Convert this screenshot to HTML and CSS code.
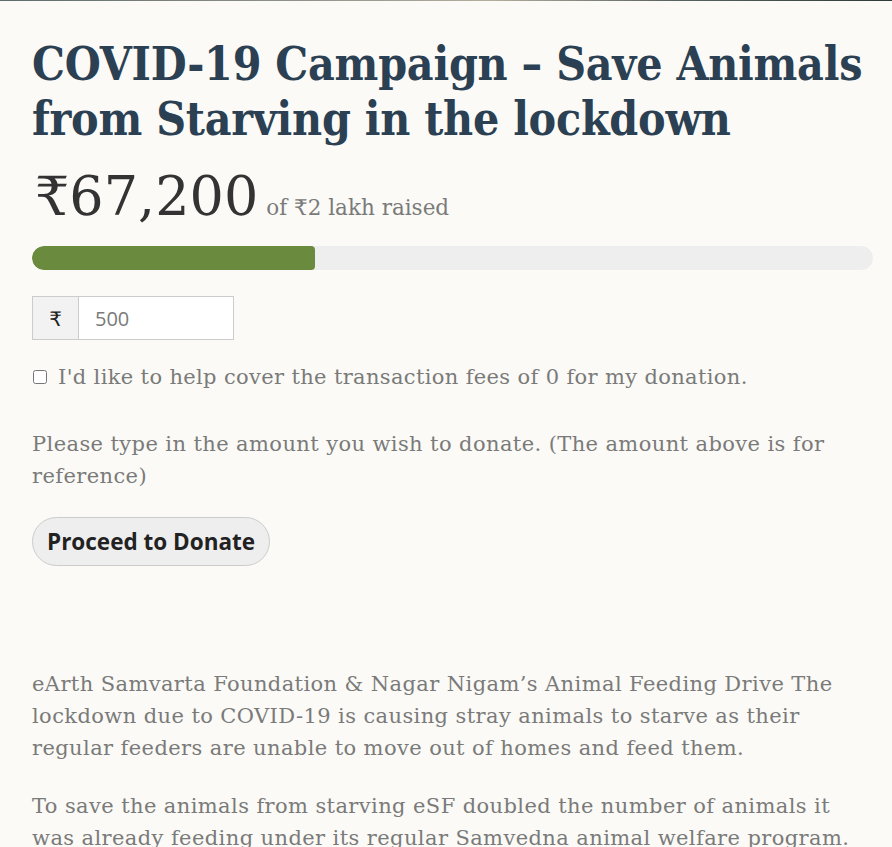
FILE: index.html
```html
<!DOCTYPE html>
<html lang="en">
<head>
<meta charset="utf-8">
<title>COVID-19 Campaign</title>
<link rel="stylesheet" href="styles.css">
</head>
<body>
<div class="topline"></div>
<main class="page">
  <h1 class="title">COVID-19 Campaign – Save Animals from Starving in the lockdown</h1>
  <div class="raised">
    <span class="raised-amount">₹67,200</span>
    <span class="raised-goal">of ₹2 lakh raised</span>
  </div>
  <div class="progress"><div class="progress-fill" style="width:33.6%"></div></div>
  <div class="amount-group">
    <span class="amount-prefix">₹</span>
    <input class="amount-input" type="text" value="500">
  </div>
  <label class="fees">
    <input class="fees-check" type="checkbox">
    <span>I'd like to help cover the transaction fees of 0 for my donation.</span>
  </label>
  <p class="note">Please type in the amount you wish to donate. (The amount above is for reference)</p>
  <button class="donate-btn" type="button">Proceed to Donate</button>
  <div class="description">
    <p>eArth Samvarta Foundation &amp; Nagar Nigam’s Animal Feeding Drive The lockdown due to COVID-19 is causing stray animals to starve as their regular feeders are unable to move out of homes and feed them.</p>
    <p>To save the animals from starving eSF doubled the number of animals it was already feeding under its regular Samvedna animal welfare program.</p>
  </div>
</main>
</body>
</html>
```

FILE: styles.css
```css
html, body {
  margin: 0;
  padding: 0;
  background: #fbfaf6;
}
body {
  font-family: "DejaVu Serif", "Liberation Serif", serif;
  color: #777;
  overflow: hidden;
}
.topline {
  height: 1px;
  background: linear-gradient(90deg, #5c6b6b 0%, #9a9a90 40%, #b3ad9c 55%, #5a6462 75%, #2e3a37 100%);
}
.page {
  padding: 0 19px 0 32px;
}
.title {
  margin: 36px 0 0;
  font-family: "DejaVu Serif Condensed", "DejaVu Serif", serif;
  font-stretch: condensed;
  font-size: 46px;
  letter-spacing: -0.25px;
  line-height: 55px;
  font-weight: 700;
  color: #2b4153;
}
.raised {
  margin-top: 20px;
  display: flex;
  align-items: baseline;
  gap: 8px;
}
.raised-amount {
  font-size: 54px;
  line-height: 60px;
  color: #333;
  padding-left: 3px;
}
.raised-goal {
  font-size: 21.5px;
  color: #7a7a7a;
}
.progress {
  margin-top: 19px;
  height: 24px;
  border-radius: 12px;
  background: #eeeeee;
  overflow: hidden;
}
.progress-fill {
  height: 100%;
  background: #6a8a3e;
  border-radius: 12px 4px 4px 12px;
}
.amount-group {
  margin-top: 26px;
  display: flex;
  width: 202px;
  height: 44px;
  box-sizing: border-box;
  border: 1px solid #cccccc;
}
.amount-prefix {
  width: 45px;
  display: flex;
  align-items: center;
  justify-content: center;
  background: #f2f2f2;
  border-right: 1px solid #cccccc;
  font-family: "Open Sans", "DejaVu Sans", sans-serif;
  font-size: 20px;
  color: #222;
}
.amount-input {
  flex: 1;
  min-width: 0;
  border: 0;
  outline: 0;
  background: #fff;
  padding: 0 0 0 16px;
  font-family: "Open Sans", "DejaVu Sans", sans-serif;
  font-size: 20px;
  color: #7a7a7a;
}
.fees {
  margin-top: 21px;
  display: flex;
  align-items: center;
  gap: 11px;
  font-size: 21px;
  letter-spacing: 0.35px;
  line-height: 32px;
  color: #7a7a7a;
}
.fees-check {
  margin: 0 0 0 1px;
  width: 14px;
  height: 14px;
}
.note {
  margin: 35px 0 0;
  font-size: 21px;
  letter-spacing: 0.4px;
  line-height: 32px;
  color: #7a7a7a;
}
.donate-btn {
  margin-top: 25px;
  height: 49px;
  padding: 0 14px;
  border: 1px solid #cccccc;
  border-radius: 25px;
  background: #eeeeee;
  font-family: "Open Sans", "DejaVu Sans", sans-serif;
  font-weight: 700;
  font-size: 22.5px;
  color: #222;
}
.description {
  margin-top: 102px;
}
.description p {
  margin: 0 0 26px;
  font-size: 21px;
  letter-spacing: 0.4px;
  line-height: 32px;
  color: #7a7a7a;
}
```
